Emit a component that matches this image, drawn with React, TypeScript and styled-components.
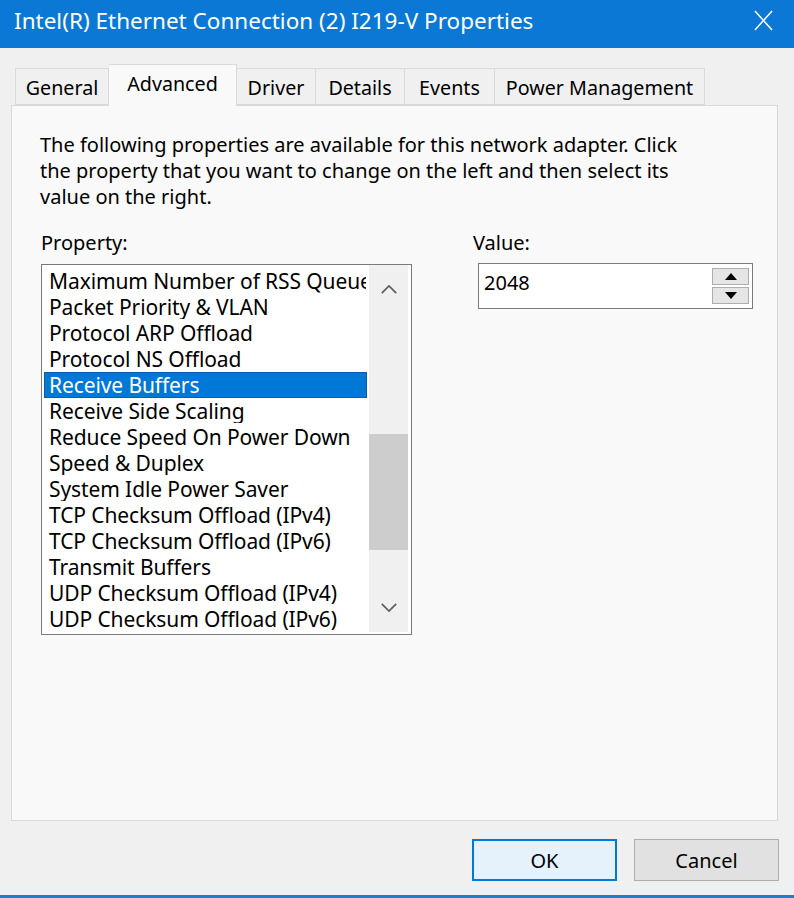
import React from 'react';
import styled, { createGlobalStyle } from 'styled-components';

const GlobalStyle = createGlobalStyle`
  html, body {
    margin: 0;
    padding: 0;
    background: #f0f0f0;
  }
  body {
    font-family: 'Noto Sans', 'Liberation Sans', sans-serif;
  }
`;

const tabs = [
  { label: 'General', width: 94 },
  { label: 'Advanced', width: 128 },
  { label: 'Driver', width: 79 },
  { label: 'Details', width: 89 },
  { label: 'Events', width: 90 },
  { label: 'Power Management', width: 210 },
];

const properties = [
  'Maximum Number of RSS Queues',
  'Packet Priority & VLAN',
  'Protocol ARP Offload',
  'Protocol NS Offload',
  'Receive Buffers',
  'Receive Side Scaling',
  'Reduce Speed On Power Down',
  'Speed & Duplex',
  'System Idle Power Saver',
  'TCP Checksum Offload (IPv4)',
  'TCP Checksum Offload (IPv6)',
  'Transmit Buffers',
  'UDP Checksum Offload (IPv4)',
  'UDP Checksum Offload (IPv6)',
];

const App = () => {
  return (
    <Window>
      <GlobalStyle />
      <TitleBar>
        <Title>Intel(R) Ethernet Connection (2) I219-V Properties</Title>
        <CloseIcon viewBox="0 0 20 22">
          <path d="M1 1 L19 21 M19 1 L1 21" stroke="#fff" strokeWidth="1.6" fill="none" />
        </CloseIcon>
      </TitleBar>

      <Body>
        <TabStrip>
          {tabs.map((t) => (
            <Tab key={t.label} width={t.width} selected={t.label === 'Advanced'}>
              {t.label}
            </Tab>
          ))}
        </TabStrip>

        <Panel>
          <Description>
            The following properties are available for this network adapter. Click
            <br />
            the property that you want to change on the left and then select its
            <br />
            value on the right.
          </Description>

          <Columns>
            <PropertyColumn>
              <Label>Property:</Label>
              <ListBox>
                <Items>
                  {properties.map((p) => (
                    <Item key={p} selected={p === 'Receive Buffers'}>
                      {p}
                    </Item>
                  ))}
                </Items>
                <ScrollBar>
                  <Arrow viewBox="0 0 20 12">
                    <path d="M2 10 L10 2 L18 10" stroke="#606060" strokeWidth="2" fill="none" />
                  </Arrow>
                  <Track>
                    <Thumb />
                  </Track>
                  <Arrow viewBox="0 0 20 12">
                    <path d="M2 2 L10 10 L18 2" stroke="#606060" strokeWidth="2" fill="none" />
                  </Arrow>
                </ScrollBar>
              </ListBox>
            </PropertyColumn>

            <ValueColumn>
              <Label>Value:</Label>
              <SpinBox>
                <SpinText>2048</SpinText>
                <SpinButtons>
                  <SpinButton>
                    <svg width="12" height="7" viewBox="0 0 12 7">
                      <path d="M6 0 L12 7 L0 7 Z" fill="#000" />
                    </svg>
                  </SpinButton>
                  <SpinButton>
                    <svg width="12" height="7" viewBox="0 0 12 7">
                      <path d="M0 0 L12 0 L6 7 Z" fill="#000" />
                    </svg>
                  </SpinButton>
                </SpinButtons>
              </SpinBox>
            </ValueColumn>
          </Columns>
        </Panel>

        <ButtonRow>
          <Button primary>OK</Button>
          <Button>Cancel</Button>
        </ButtonRow>
      </Body>
    </Window>
  );
};

export default App;

const Window = styled.div`
  width: 794px;
  height: 898px;
  display: flex;
  flex-direction: column;
  background: #f0f0f0;
  border-bottom: 3px solid #1a7fd0;
  box-sizing: border-box;
  overflow: hidden;
`;

const TitleBar = styled.div`
  height: 48px;
  flex-shrink: 0;
  background: #0a78d4;
  display: flex;
  align-items: center;
  justify-content: space-between;
  padding: 0 21px 0 14px;
`;

const Title = styled.div`
  color: #ffffff;
  font-size: 22.5px;
  margin-top: -8px;
`;

const CloseIcon = styled.svg`
  width: 19px;
  height: 21px;
  margin-top: -8px;
`;

const Body = styled.div`
  flex: 1;
  display: flex;
  flex-direction: column;
  padding: 16px 16px 0 11px;
`;

const TabStrip = styled.div`
  display: flex;
  align-items: flex-end;
  padding-left: 4px;
  height: 41px;
  position: relative;
  z-index: 1;
`;

const Tab = styled.div<{ selected?: boolean; width: number }>`
  box-sizing: border-box;
  width: ${(p) => p.width}px;
  height: ${(p) => (p.selected ? '42px' : '37px')};
  margin-bottom: ${(p) => (p.selected ? '-1px' : '0')};
  padding: ${(p) => (p.selected ? '0 0 5px' : '2px 0 0')};
  display: flex;
  align-items: center;
  justify-content: center;
  white-space: nowrap;
  font-size: 19.7px;
  color: #000;
  background: ${(p) => (p.selected ? '#f9f9f9' : '#f0f0f0')};
  border: 1px solid #d9d9d9;
  border-bottom: ${(p) => (p.selected ? 'none' : '1px solid #d9d9d9')};
  & + & {
    border-left: ${(p) => (p.selected ? '1px solid #d9d9d9' : 'none')};
  }
`;

const Panel = styled.div`
  height: 716px;
  box-sizing: border-box;
  background: #f9f9f9;
  border: 1px solid #d9d9d9;
  padding: 26px 28px 0 28px;
`;

const Description = styled.div`
  font-size: 20px;
  line-height: 26px;
  color: #000;
`;

const Columns = styled.div`
  display: flex;
  margin-top: 20px;
`;

const PropertyColumn = styled.div`
  display: flex;
  flex-direction: column;
  width: 372px;
  padding-left: 1px;
`;

const ValueColumn = styled.div`
  display: flex;
  flex-direction: column;
  margin-left: 61px;
`;

const Label = styled.div`
  font-size: 20px;
  line-height: 26px;
  color: #000;
  margin-bottom: 10px;
`;

const ListBox = styled.div`
  width: 371px;
  height: 371px;
  box-sizing: border-box;
  border: 1px solid #7a7a7a;
  background: #ffffff;
  display: flex;
  margin-top: -2px;
`;

const Items = styled.div`
  flex: 1;
  min-width: 0;
  padding: 3px 2px 0 2px;
  overflow: hidden;
`;

const Item = styled.div<{ selected?: boolean }>`
  height: 26px;
  line-height: 24px;
  padding-left: 4px;
  font-size: 21px;
  letter-spacing: -0.1px;
  white-space: nowrap;
  overflow: hidden;
  color: ${(p) => (p.selected ? '#ffffff' : '#000000')};
  background: ${(p) => (p.selected ? '#0078d7' : 'transparent')};
  box-sizing: border-box;
  border: 1px solid ${(p) => (p.selected ? '#0a5ea8' : 'transparent')};
`;

const ScrollBar = styled.div`
  width: 39px;
  flex-shrink: 0;
  margin: 0 3px 2px 0;
  background: #f0f0f0;
  display: flex;
  flex-direction: column;
  align-items: center;
`;

const Arrow = styled.svg`
  width: 18px;
  height: 11px;
  margin: 19px 0;
  flex-shrink: 0;
`;

const Track = styled.div`
  flex: 1;
  width: 100%;
  position: relative;
`;

const Thumb = styled.div`
  position: absolute;
  left: 0;
  right: 0;
  top: 120px;
  height: 116px;
  background: #cdcdcd;
`;

const SpinBox = styled.div`
  width: 275px;
  height: 46px;
  margin-top: -3px;
  margin-left: 5px;
  box-sizing: border-box;
  border: 1px solid #7a7a7a;
  background: #ffffff;
  display: flex;
  align-items: center;
  justify-content: space-between;
  padding: 0 3px 0 5px;
`;

const SpinText = styled.div`
  font-size: 20px;
  color: #000;
  margin-top: -8px;
`;

const SpinButtons = styled.div`
  display: flex;
  flex-direction: column;
  gap: 2px;
`;

const SpinButton = styled.div`
  width: 37px;
  height: 17px;
  box-sizing: border-box;
  background: #e5e5e5;
  border: 1px solid #adadad;
  display: flex;
  align-items: center;
  justify-content: center;
`;

const ButtonRow = styled.div`
  display: flex;
  justify-content: flex-end;
  gap: 17px;
  margin-top: 18px;
`;

const Button = styled.div<{ primary?: boolean }>`
  width: 145px;
  height: 42px;
  box-sizing: border-box;
  display: flex;
  align-items: center;
  justify-content: center;
  font-size: 20px;
  color: #000;
  background: ${(p) => (p.primary ? '#e5f1fb' : '#e1e1e1')};
  border: ${(p) => (p.primary ? '2px solid #0078d7' : '1px solid #adadad')};
  margin-right: ${(p) => (p.primary ? '0' : '-1px')};
`;
